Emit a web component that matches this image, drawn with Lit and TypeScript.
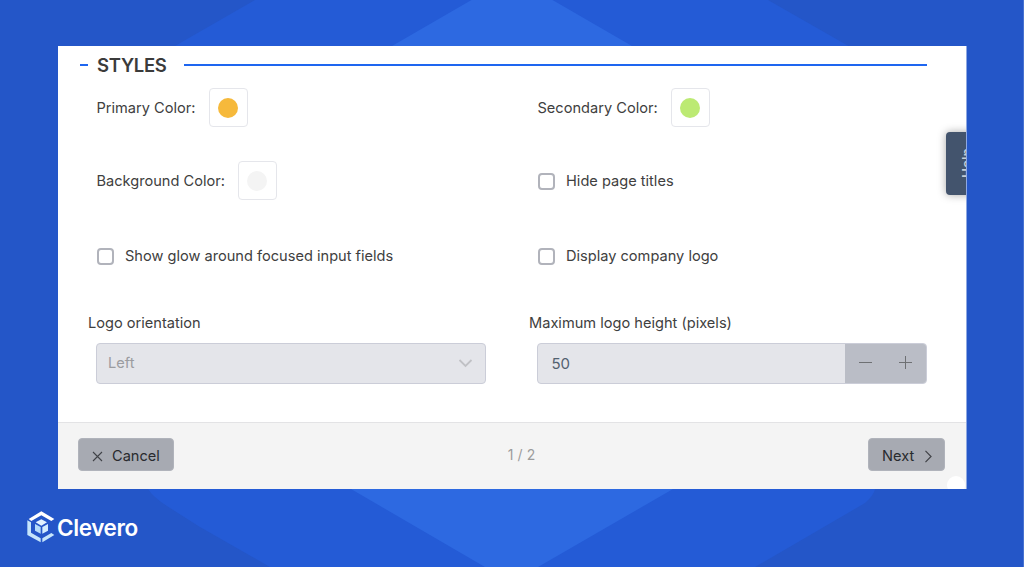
import { html, css, LitElement } from 'lit';
import { customElement, property } from 'lit/decorators.js';

/**
 * Color field: label and a swatch button.
 *
 * @element color-field
 */
@customElement('color-field')
export class ColorField extends LitElement {
  static styles = css`
    :host {
      display: flex;
      align-items: center;
      gap: 13px;
      height: 39px;
    }
    .swatch {
      box-sizing: border-box;
      display: flex;
      align-items: center;
      justify-content: center;
      width: 39px;
      height: 39px;
      padding: 0;
      border: 1px solid #e5e6eb;
      border-radius: 4px;
      background: #fff;
    }
    .dot {
      width: 20px;
      height: 20px;
      border-radius: 50%;
    }
  `;

  @property() label = '';
  @property() color = '#fff';

  render() {
    return html`
      <span>${this.label}:</span>
      <button class="swatch"><span class="dot" style="background: ${this.color}"></span></button>
    `;
  }
}

/**
 * Checkbox with its label.
 *
 * @element check-field
 */
@customElement('check-field')
export class CheckField extends LitElement {
  static styles = css`
    :host {
      display: flex;
      align-items: center;
      padding-top: 1px;
    }
    .check {
      display: flex;
      align-items: center;
      gap: 11px;
    }
    .box {
      appearance: none;
      box-sizing: border-box;
      width: 17px;
      height: 17px;
      margin: 0 0 0 0.5px;
      border: 2px solid #b1b3bb;
      border-radius: 4px;
      background: #fff;
    }
    .box:checked {
      background: #1e66f0;
    }
  `;

  @property() label = '';

  render() {
    return html`
      <label class="check"><input class="box" type="checkbox" />${this.label}</label>
    `;
  }
}

@customElement('app-root')
export class AppRoot extends LitElement {
  static styles = css`
    :host {
      display: block;
      font-family: Inter, 'Liberation Sans', sans-serif;
      font-size: 14.6px;
      color: #404040;
    }
    .page {
      position: relative;
      box-sizing: border-box;
      display: flex;
      flex-direction: column;
      width: 1024px;
      height: 567px;
      padding: 46px 57px 0 58px;
      overflow: hidden;
      background: #2456c8;
    }
    .backdrop {
      position: absolute;
      inset: 0;
    }
    .panel {
      position: relative;
      box-sizing: border-box;
      display: flex;
      flex-direction: column;
      width: 909px;
      height: 443px;
      border-right: 1px solid #8ea8e2;
      overflow: hidden;
      background: #fff;
    }
    .heading {
      display: flex;
      align-items: center;
      height: 38px;
      padding: 0 39px 0 22px;
    }
    .dash {
      width: 8px;
      height: 1.5px;
      margin-right: 1px;
      background: #1e66f0;
    }
    .title {
      box-sizing: border-box;
      width: 95px;
      margin: 0;
      padding: 1px 0 0 8px;
      font-size: 18.5px;
      font-weight: 600;
      letter-spacing: -0.3px;
      line-height: 37px;
      color: #3b3b3b;
    }
    .rule {
      flex: 1;
      height: 2px;
      background: #1e66f0;
    }
    .fields {
      display: grid;
      grid-template-columns: 390px 390px;
      grid-template-rows: 39px 39px 43px;
      column-gap: 51px;
      row-gap: 34px;
      padding: 4px 39px 0 38.5px;
    }
    .inputs {
      display: grid;
      grid-template-columns: 390px 390px;
      column-gap: 51px;
      padding: 34px 39px 0 38px;
    }
    .label {
      display: block;
      height: 32px;
      margin-left: -8px;
      line-height: 24px;
    }
    .control {
      box-sizing: border-box;
      display: flex;
      align-items: center;
      height: 41px;
      border: 1px solid #cbcdd8;
      border-radius: 4px;
      background: #e4e5ea;
      overflow: hidden;
    }
    .select {
      justify-content: space-between;
      padding: 0 12px 1px 11px;
      color: #9b9ca0;
    }
    .number {
      font-size: 15px;
      color: #526170;
    }
    .value {
      flex: 1;
      padding-left: 13.5px;
    }
    .step {
      display: flex;
      align-items: center;
      justify-content: center;
      width: 40.5px;
      height: 41px;
      padding: 0 0 2px;
      border: none;
      background: #babdc6;
    }
    .footer {
      box-sizing: border-box;
      display: flex;
      align-items: center;
      justify-content: space-between;
      height: 67px;
      margin-top: auto;
      padding: 0 21px 3px 20px;
      border-top: 1px solid #e3e3e5;
      background: #f4f4f4;
    }
    .side {
      display: flex;
    }
    .button {
      box-sizing: border-box;
      display: flex;
      align-items: center;
      height: 33px;
      padding: 3px 13px 0;
      border: 1px solid #b0b3bb;
      border-radius: 4px;
      background: #a7aab2;
      font: inherit;
      color: #292b2e;
    }
    .cancel {
      gap: 9px;
      width: 96px;
    }
    .next {
      gap: 10px;
      width: 77px;
      padding-right: 11px;
    }
    .count {
      margin-left: 1px;
      font-size: 14px;
      letter-spacing: 0.1px;
      color: #9c9c9c;
    }
    .help {
      position: absolute;
      left: 888px;
      top: 86px;
      box-sizing: border-box;
      width: 40px;
      height: 63px;
      padding: 16px 0 0 13px;
      border-radius: 4px;
      background: #43546d;
      box-shadow: 0 0 8px rgba(0, 0, 0, 0.35);
      font-size: 13.5px;
      font-weight: 600;
      line-height: 16px;
      color: #c4cbd5;
    }
    .help-text {
      writing-mode: vertical-rl;
      transform: rotate(180deg);
    }
    .bubble {
      position: absolute;
      right: 1px;
      bottom: -5px;
      width: 18px;
      height: 18px;
      border-radius: 50%;
      background: #fff;
    }
    .brand {
      position: relative;
      display: flex;
      align-items: center;
      gap: 2px;
      margin: 22px 0 0 -31px;
      font-size: 22.5px;
      font-weight: 600;
      letter-spacing: -0.4px;
      color: #fff;
    }
  `;

  render() {
    return html`
      <div class="page">
        <svg class="backdrop" width="1024" height="567" viewBox="0 0 1024 567">
          <path fill="#245bd6" d="M255 0H768L848.5 46V489H875Q874 495 865 503L755 567H270L200 527L167 506Q153 497 148 489H175V46Z" />
          <path fill="#2d69e1" d="M471.500 0H552.500L632 46V489H673L538 567H485L351 489H392V46Z" />
          <path fill="#4772d0" d="M1023 0h1v567h-1z" />
        </svg>
        <main class="panel">
          <div class="heading">
            <span class="dash"></span>
            <h2 class="title">STYLES</h2>
            <span class="rule"></span>
          </div>
          <div class="fields">
            <color-field label="Primary Color" color="#f6b93b"></color-field>
            <color-field label="Secondary Color" color="#bcea73"></color-field>
            <color-field label="Background Color" color="#f4f4f4"></color-field>
            <check-field label="Hide page titles"></check-field>
            <check-field label="Show glow around focused input fields"></check-field>
            <check-field label="Display company logo"></check-field>
          </div>
          <div class="inputs">
            <div>
              <span class="label">Logo orientation</span>
              <div class="control select">
                <span>Left</span>
                <svg width="15" height="10" viewBox="0 0 15 10" fill="none" stroke="#c0c1c5" stroke-width="1.8">
                  <path d="M1.500 2L7.500 8L13.500 2" />
                </svg>
              </div>
            </div>
            <div>
              <span class="label">Maximum logo height (pixels)</span>
              <div class="control number">
                <span class="value">50</span>
                <button class="step">
                  <svg width="13" height="13" viewBox="0 0 13 13" stroke="#6e7073"><path d="M0 6.500H13" /></svg>
                </button>
                <button class="step">
                  <svg width="13" height="13" viewBox="0 0 13 13" stroke="#6e7073"><path d="M0 6.500H13M6.500 0V13" /></svg>
                </button>
              </div>
            </div>
          </div>
          <footer class="footer">
            <div class="side">
              <button class="button cancel">
                <svg width="11" height="11" viewBox="0 0 11 11" stroke="#404247" stroke-width="1.1"><path d="M1 1L10 10M10 1L1 10" /></svg>
                Cancel
              </button>
            </div>
            <span class="count">1 / 2</span>
            <div class="side">
              <button class="button next">
                Next
                <svg width="9" height="13" viewBox="0 0 9 13" fill="none" stroke="#404247" stroke-width="1.2"><path d="M1.500 .8L7.200 6.500L1.500 12.200" /></svg>
              </button>
            </div>
          </footer>
          <div class="help"><span class="help-text">Help</span></div>
          <span class="bubble"></span>
        </main>
        <div class="brand">
          <svg width="28" height="32" viewBox="81 65 84 96">
            <path fill="#fff" d="M86 89L124 66L163 89L154 95L124 78L94 95Z" />
            <path fill="#c5e5fb" d="M82 93L93 99V130L122 147V159L82 137ZM127 147L154 131L163 137L127 159Z" />
            <path fill="#e2f3ff" d="M124 90L141 99L124 109L107 99Z" />
            <path fill="#b4dcfa" d="M105 104L122 113V133L105 124Z" />
            <path fill="#d3edff" d="M144 104L127 113V133L144 124Z" />
          </svg>
          <span>Clevero</span>
        </div>
      </div>
    `;
  }
}
